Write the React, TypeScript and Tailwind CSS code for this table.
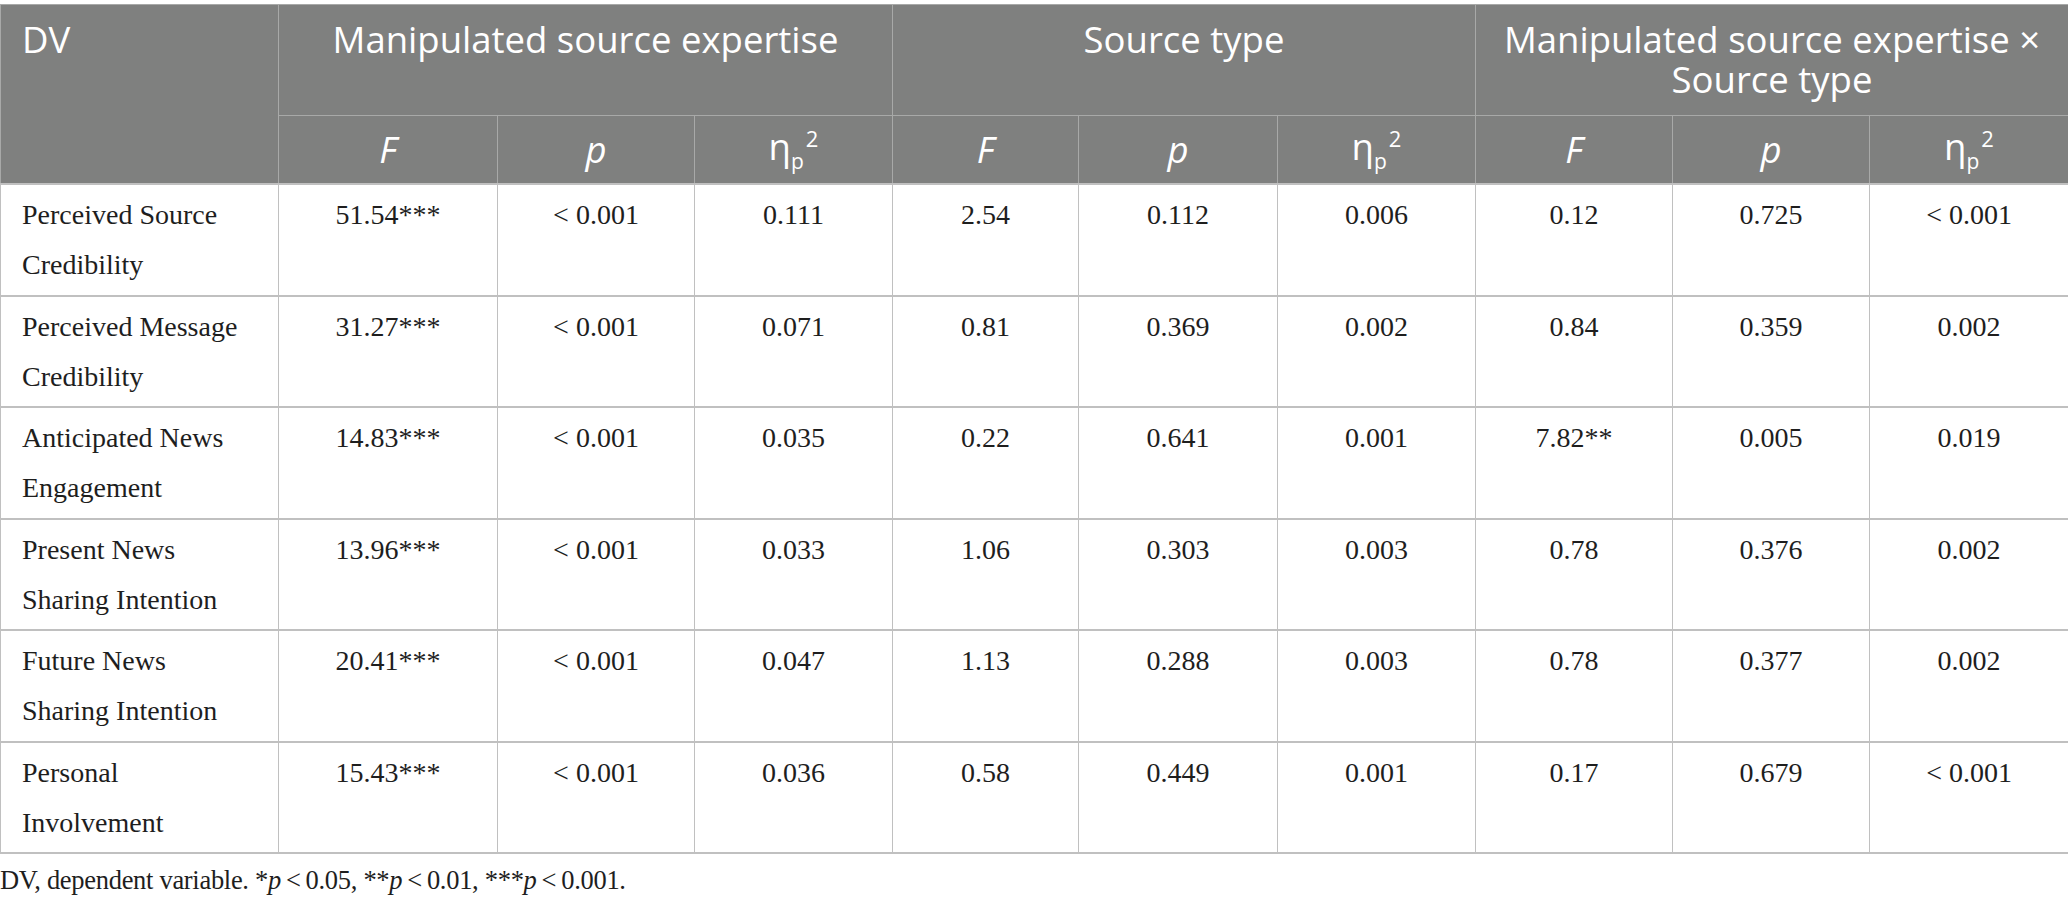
const cols = [278, 219, 197, 198, 186, 199, 198, 197, 197, 199];

const rows: { dv: string[]; vals: string[] }[] = [
  {
    dv: ['Perceived Source', 'Credibility'],
    vals: ['51.54***', '< 0.001', '0.111', '2.54', '0.112', '0.006', '0.12', '0.725', '< 0.001'],
  },
  {
    dv: ['Perceived Message', 'Credibility'],
    vals: ['31.27***', '< 0.001', '0.071', '0.81', '0.369', '0.002', '0.84', '0.359', '0.002'],
  },
  {
    dv: ['Anticipated News', 'Engagement'],
    vals: ['14.83***', '< 0.001', '0.035', '0.22', '0.641', '0.001', '7.82**', '0.005', '0.019'],
  },
  {
    dv: ['Present News', 'Sharing Intention'],
    vals: ['13.96***', '< 0.001', '0.033', '1.06', '0.303', '0.003', '0.78', '0.376', '0.002'],
  },
  {
    dv: ['Future News', 'Sharing Intention'],
    vals: ['20.41***', '< 0.001', '0.047', '1.13', '0.288', '0.003', '0.78', '0.377', '0.002'],
  },
  {
    dv: ['Personal', 'Involvement'],
    vals: ['15.43***', '< 0.001', '0.036', '0.58', '0.449', '0.001', '0.17', '0.679', '< 0.001'],
  },
];

const rowHeights = ['h-[112px]', 'h-[111px]', 'h-[112px]', 'h-[111px]', 'h-[112px]', 'h-[111px]'];

function Eta() {
  return (
    <span>
      η
      <span className="relative top-[9px] text-[21px]">p</span>
      <span className="relative -top-[13px] ml-[2px] text-[22px]">2</span>
    </span>
  );
}

function SubHeads() {
  return (
    <>
      <th className="border border-[#a8a9a8] align-middle font-normal italic">F</th>
      <th className="border border-[#a8a9a8] align-middle font-normal italic">p</th>
      <th className="border border-[#a8a9a8] align-middle font-normal">
        <Eta />
      </th>
    </>
  );
}

export default function App() {
  return (
    <div className="w-[2068px] bg-white pt-[4px]">
      <table className="w-[2068px] table-fixed border-collapse">
        <colgroup>
          {cols.map((w, i) => (
            <col key={i} style={{ width: w }} />
          ))}
        </colgroup>
        <thead className="bg-[#7f807f] text-white font-['Open_Sans',sans-serif] text-[36.5px] leading-[40px]">
          <tr className="h-[111px]">
            <th
              rowSpan={2}
              className="border border-[#a8a9a8] px-[21px] pt-[14px] text-left align-top font-normal"
            >
              DV
            </th>
            <th colSpan={3} className="border border-[#a8a9a8] pt-[14px] align-top font-normal">
              Manipulated source expertise
            </th>
            <th colSpan={3} className="border border-[#a8a9a8] pt-[14px] align-top font-normal">
              Source type
            </th>
            <th colSpan={3} className="border border-[#a8a9a8] px-[8px] pt-[14px] align-top font-normal">
              <span className="block">Manipulated source expertise ×</span>
              <span className="block">Source type</span>
            </th>
          </tr>
          <tr className="h-[68px]">
            <SubHeads />
            <SubHeads />
            <SubHeads />
          </tr>
        </thead>
        <tbody className="font-['Liberation_Serif',serif] text-[28px] leading-[50px] text-[#1e1e1e]">
          {rows.map((r, i) => (
            <tr key={i} className={rowHeights[i]}>
              <td className="border-x border-y-2 border-[#c0c0c0] px-[21px] pt-[5px] align-top">
                {r.dv[0]}
                <br />
                {r.dv[1]}
              </td>
              {r.vals.map((v, j) => (
                <td
                  key={j}
                  className="border-x border-y-2 border-[#c0c0c0] pt-[5px] text-center align-top"
                >
                  {v}
                </td>
              ))}
            </tr>
          ))}
        </tbody>
      </table>
      <p className="mt-[9px] font-['Liberation_Serif',serif] text-[26.5px] leading-[34px] tracking-[-0.3px] text-[#1e1e1e]">
        DV, dependent variable. *<i>p</i>&thinsp;&lt;&thinsp;0.05, **<i>p</i>&thinsp;&lt;&thinsp;0.01, ***
        <i>p</i>&thinsp;&lt;&thinsp;0.001.
      </p>
    </div>
  );
}
